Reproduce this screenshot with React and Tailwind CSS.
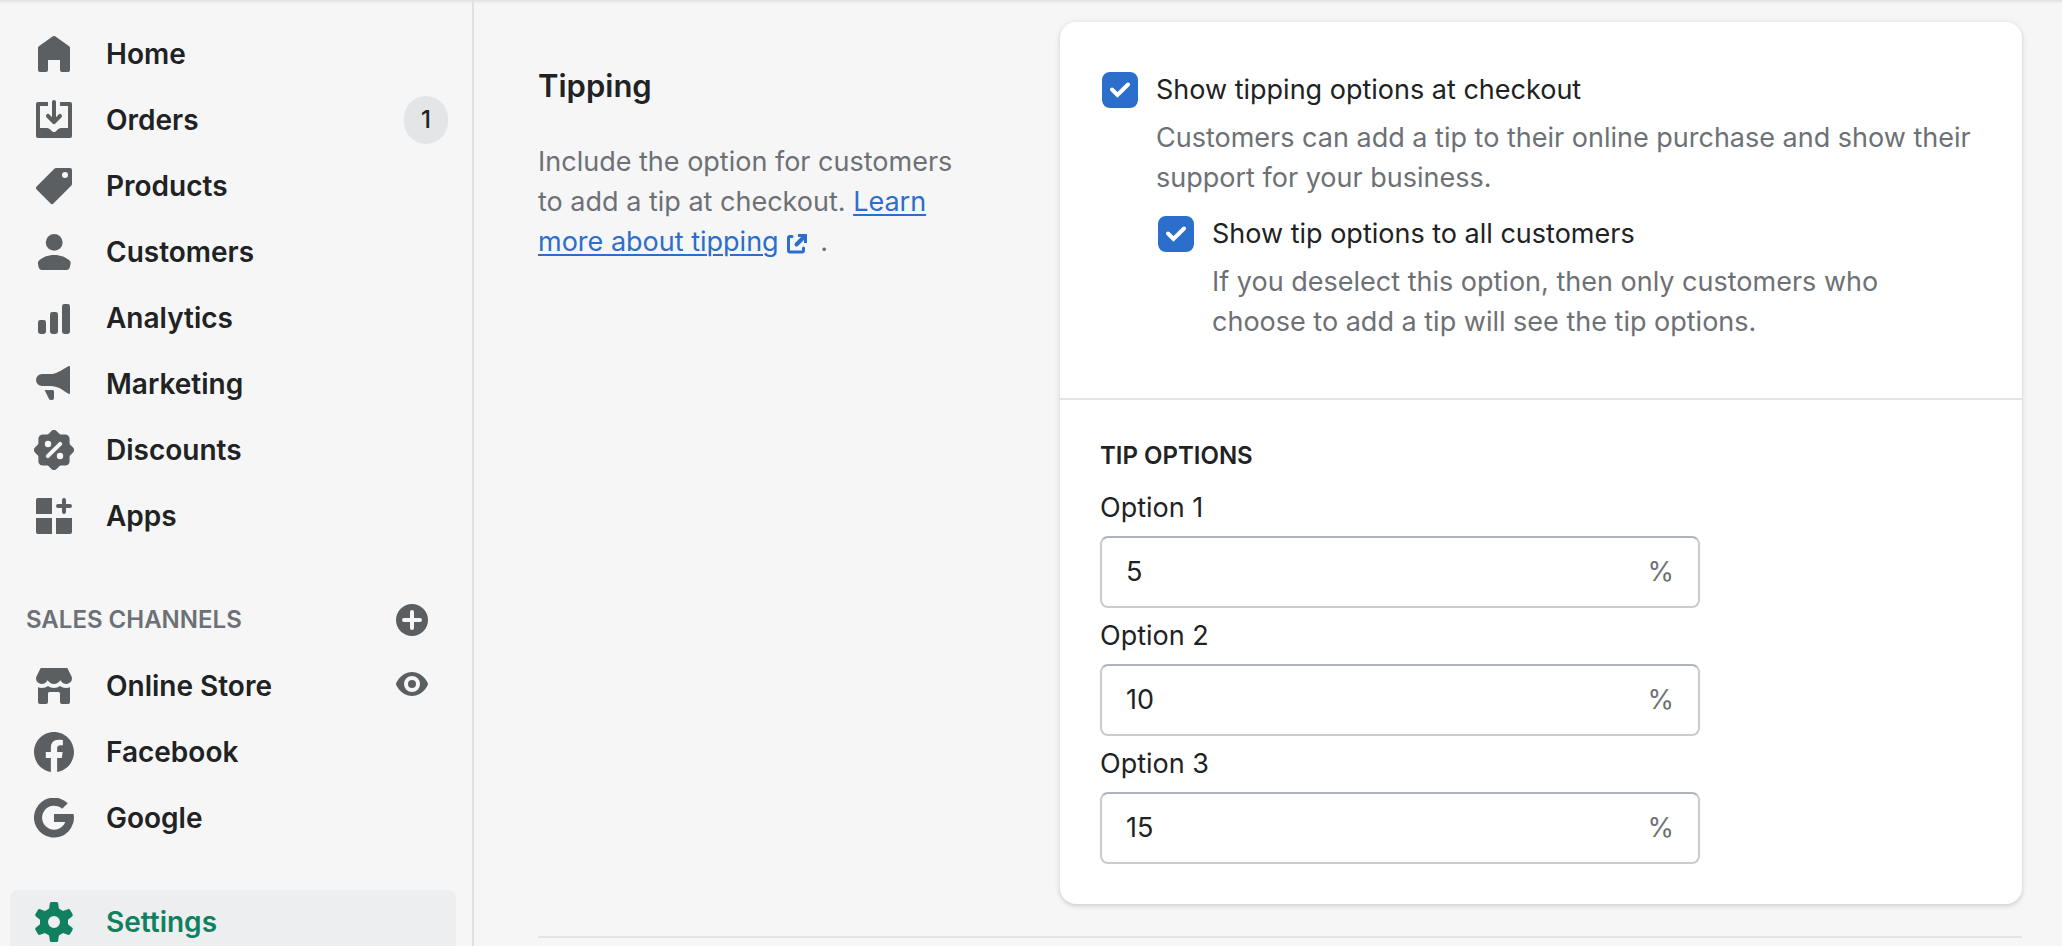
import React from "react";

function Icon({ children, className = "size-10" }) {
  return (
    <svg viewBox="0 0 20 20" className={`${className} shrink-0`} fill="currentColor" aria-hidden="true">
      {children}
    </svg>
  );
}

const HomeIcon = () => (
  <Icon>
    <path d="M13 13H7v5a1 1 0 0 1-1 1H3a1 1 0 0 1-1-1V7c0-.33.16-.64.42-.83l7-5a1 1 0 0 1 1.16 0l7 5c.26.19.42.5.42.83v11a1 1 0 0 1-1 1h-3a1 1 0 0 1-1-1v-5z" />
  </Icon>
);

const OrdersIcon = () => (
  <Icon>
    <path d="M11 1a1 1 0 1 0-2 0v7.59L7.71 7.29a1 1 0 0 0-1.42 1.42l3 3a1 1 0 0 0 1.42 0l3-3a1 1 0 0 0-1.42-1.42L11 8.59V1z" />
    <path d="M3 14V3h4V1H2a1 1 0 0 0-1 1v16a1 1 0 0 0 1 1h16a1 1 0 0 0 1-1V2a1 1 0 0 0-1-1h-5v2h4v11h-3.5c-.8 0-1.4.5-2 1.1-.5.6-.9.9-1.5.9s-1-.3-1.5-.9c-.6-.6-1.2-1.1-2-1.1H3z" />
  </Icon>
);

const ProductsIcon = () => (
  <Icon>
    <path
      fillRule="evenodd"
      d="M10.29 1.29A1 1 0 0 1 11 1h7a1 1 0 0 1 1 1v7a1 1 0 0 1-.29.71l-9 9a1 1 0 0 1-1.42 0l-7-7a1 1 0 0 1 0-1.42l9-9zM15.5 6a1.5 1.5 0 1 0 0-3 1.5 1.5 0 0 0 0 3z"
    />
  </Icon>
);

const CustomersIcon = () => (
  <Icon>
    <circle cx="10.1" cy="5.2" r="4.2" />
    <path d="M10.1 11.5c-3.2 0-6 1.2-7.7 2.9-.4.4-.5 1-.4 1.5l.3 1.7c.2.8.8 1.4 1.6 1.4h12.4c.8 0 1.4-.6 1.6-1.4l.4-1.7c.1-.5 0-1.1-.4-1.5-1.7-1.7-4.6-2.9-7.8-2.9z" />
  </Icon>
);

const AnalyticsIcon = () => (
  <Icon>
    <rect x="2" y="11" width="4" height="7" rx="1.2" />
    <rect x="8" y="7" width="4" height="11" rx="1.2" />
    <rect x="14" y="3" width="4" height="15" rx="1.2" />
  </Icon>
);

const MarketingIcon = () => (
  <Icon>
    <path d="M4 5h4c3.2 0 5.4-1.7 9.2-3.9.4-.2.8 0 .8.4v13c0 .4-.4.6-.8.4C14.6 13.2 12 11 8 11H4a3 3 0 0 1 0-6z" />
    <path d="M5.3 13h3.9c.5 0 .8.3.8.8V17a1 1 0 0 1-1 1h-.6c-.4 0-.7-.2-.9-.5L5.3 13z" />
  </Icon>
);

const DiscountsIcon = () => (
  <Icon>
    <rect x="2.2" y="2.2" width="15.6" height="15.6" rx="2.2" />
    <rect x="2.35" y="2.35" width="15.3" height="15.3" rx="2" transform="rotate(45 10 10)" />
    <g className="fill-[#f6f6f7] stroke-[#f6f6f7]">
      <circle cx="7" cy="7" r="1.6" stroke="none" />
      <circle cx="13" cy="13" r="1.6" stroke="none" />
      <path d="M6.9 13.1l6.2-6.2" strokeWidth="2" strokeLinecap="round" />
    </g>
  </Icon>
);

const AppsIcon = () => (
  <Icon>
    <path d="M2 1h7v8H1V2a1 1 0 0 1 1-1zM1 11h8v8H2a1 1 0 0 1-1-1v-7zM11 11h8v7a1 1 0 0 1-1 1h-7v-8z" />
    <path d="M15 2v6M12 5h6" stroke="currentColor" strokeWidth="2" strokeLinecap="round" />
  </Icon>
);

const AddIcon = () => (
  <Icon>
    <circle cx="10" cy="10" r="8" />
    <path d="M10 6v8M6 10h8" className="stroke-[#f6f6f7]" strokeWidth="2" strokeLinecap="round" />
  </Icon>
);

const StoreIcon = () => (
  <Icon>
    <path d="M3.9 1h12.2c.4 0 .8.2.9.6l1.7 3.5c.2.4.3.7.3 1.1A2.9 2.9 0 0 1 16.200 9c-1.400 0-2.300-.7-3-1.900C12.300 8.300 11.400 9 10 9s-2.300-.7-3.200-1.900C6.100 8.300 5.200 9 3.800 9A2.900 2.900 0 0 1 1 6.200c0-.4.1-.7.3-1.100L3 1.600c.1-.4.5-.6.9-.6z" />
    <path d="M2 10.600c.6.200 1.300.4 2 .4 1.100 0 2.200-.4 3-1 .8.600 1.900 1 3 1s2.200-.4 3-1c.8.600 1.900 1 3 1 .7 0 1.400-.2 2-.4V18a1 1 0 0 1-1 1h-3a1 1 0 0 1-1-1v-4.200a.8.8 0 0 0-.8-.8H7.800a.8.8 0 0 0-.8.8V18a1 1 0 0 1-1 1H3a1 1 0 0 1-1-1v-7.400z" />
  </Icon>
);

const EyeIcon = () => (
  <Icon>
    <path
      fillRule="evenodd"
      d="M17.93 8.63C17.84 8.4 15.57 3 10 3S2.16 8.4 2.07 8.63a1 1 0 0 0 0 .74C2.16 9.6 4.43 15 10 15s7.84-5.4 7.93-5.63a1 1 0 0 0 0-.74zM10 13a4 4 0 1 1 0-8 4 4 0 0 1 0 8z"
    />
    <circle cx="10" cy="9" r="2" />
  </Icon>
);

const FacebookIcon = () => (
  <Icon>
    <path d="M20 10.06C20 4.5 15.52 0 10 0S0 4.5 0 10.06c0 5.02 3.66 9.18 8.44 9.94v-7.03H5.9v-2.91h2.54V7.84c0-2.52 1.49-3.91 3.78-3.91 1.09 0 2.24.2 2.24.2V6.6h-1.26c-1.24 0-1.63.78-1.63 1.57v1.89h2.77l-.44 2.91h-2.33V20C16.34 19.24 20 15.08 20 10.06z" />
  </Icon>
);

const GoogleIcon = () => (
  <Icon>
    <path d="M19.8 8H10v4h5.65A6 6 0 1 1 14.1 5.4L16.9 2.6A10 10 0 1 0 19.8 8z" />
  </Icon>
);

const GearIcon = () => (
  <Icon>
    <circle cx="10" cy="10" r="5" fill="none" stroke="currentColor" strokeWidth="4" />
    {[0, 60, 120, 180, 240, 300].map((angle) => (
      <path
        key={angle}
        transform={`rotate(${angle} 10 10)`}
        d="M8.8 0h2.4c.5 0 .8.3.9.8l.3 2.2c.1.4.3.6.7.8L13.300 5h-6.600L6.900 3.800c.4-.2.6-.4.7-.8l.3-2.200c.1-.5.4-.8.9-.8z"
      />
    ))}
  </Icon>
);

const ExternalIcon = () => (
  <svg viewBox="0 0 32 32" className="ml-0.5 inline-block size-8 align-middle" fill="none" stroke="currentColor" strokeWidth="3" aria-hidden="true">
    <path d="M11 8.5H9A1.500 1.500 0 0 0 7.500 10V22.500A1.500 1.500 0 0 0 9 24h12a1.500 1.500 0 0 0 1.500-1.500V20" strokeLinecap="round" />
    <path d="M15.500 16.500L24 8" strokeLinecap="round" strokeWidth="4" />
    <path d="M17 7.500h7.500V15" />
  </svg>
);

const mainNav = [
  { label: "Home", icon: HomeIcon },
  { label: "Orders", icon: OrdersIcon, badge: "1" },
  { label: "Products", icon: ProductsIcon },
  { label: "Customers", icon: CustomersIcon },
  { label: "Analytics", icon: AnalyticsIcon },
  { label: "Marketing", icon: MarketingIcon },
  { label: "Discounts", icon: DiscountsIcon },
  { label: "Apps", icon: AppsIcon },
];

const channels = [
  { label: "Online Store", icon: StoreIcon, preview: true },
  { label: "Facebook", icon: FacebookIcon },
  { label: "Google", icon: GoogleIcon },
];

function NavItem({ label, icon: ItemIcon, badge, preview, active }) {
  return (
    <li
      className={`flex h-16 items-center rounded-lg pl-6 ${badge ? "pr-2" : "pr-6"} ${
        active ? "bg-[#edeeef] text-[#108060]" : "text-[#5c5f62]"
      }`}
    >
      <a href="#" className="flex grow items-center gap-8" aria-current={active ? "page" : undefined}>
        <ItemIcon />
        <span className={`text-[28px] font-semibold leading-10 ${active ? "text-[#108060]" : "text-[#202223]"}`}>
          {label}
        </span>
      </a>
      {badge && (
        <span className="flex h-12 w-11 items-center justify-center rounded-full bg-[#e4e5e7] text-2xl font-medium text-[#202223]">
          {badge}
        </span>
      )}
      {preview && (
        <button type="button" aria-label="View your online store">
          <EyeIcon />
        </button>
      )}
    </li>
  );
}

function Sidebar() {
  return (
    <nav className="flex w-[474px] shrink-0 flex-col gap-10 border-r-2 border-[#e1e1e2] pl-2.5 pr-4 pt-[22px]">
      <ul className="flex flex-col gap-0.5">
        {mainNav.map((item) => (
          <NavItem key={item.label} {...item} />
        ))}
      </ul>
      <div className="flex flex-col gap-0.5">
        <div className="flex h-16 items-center justify-between pl-4 pr-6 text-[#5c5f62]">
          <h2 className="text-2xl font-semibold uppercase text-[#6d7175]">Sales channels</h2>
          <button type="button" aria-label="Add sales channel">
            <AddIcon />
          </button>
        </div>
        <ul className="flex flex-col gap-0.5">
          {channels.map((item) => (
            <NavItem key={item.label} {...item} />
          ))}
        </ul>
      </div>
      <ul>
        <NavItem label="Settings" icon={GearIcon} active />
      </ul>
    </nav>
  );
}

function Choice({ id, label, help, children }) {
  return (
    <div className="flex gap-[18px]">
      <div className="relative mt-0.5 size-9 shrink-0">
        <input
          id={id}
          type="checkbox"
          defaultChecked
          aria-describedby={`${id}-help`}
          className="peer block size-9 appearance-none rounded-lg border-2 border-[#8c9196] bg-white checked:border-[#2c6ecb] checked:bg-[#2c6ecb]"
        />
        <svg
          viewBox="0 0 36 36"
          className="pointer-events-none absolute inset-0 hidden size-9 peer-checked:block"
          fill="none"
          stroke="white"
          strokeWidth="4"
          strokeLinecap="round"
          strokeLinejoin="miter"
          aria-hidden="true"
        >
          <path d="M10 17.500l5.500 5.500L26 12.500" />
        </svg>
      </div>
      <div className="min-w-0 grow">
        <label htmlFor={id} className="block">
          {label}
        </label>
        <p id={`${id}-help`} className="mt-2 text-[#6d7175]">
          {help}
        </p>
        {children}
      </div>
    </div>
  );
}

function TipField({ number, value }) {
  const id = `tip-option-${number}`;
  return (
    <div className="flex flex-col gap-2">
      <label htmlFor={id}>Option {number}</label>
      <div className="flex h-[72px] max-w-[600px] items-center rounded-lg border-2 border-[#c9cccf] border-t-[#aeb4b9] bg-white px-6">
        <input id={id} type="text" inputMode="decimal" defaultValue={value} className="w-0 grow outline-none" />
        <span className="text-[#6d7175]">%</span>
      </div>
    </div>
  );
}

export default function App() {
  return (
    <div className="flex h-screen overflow-hidden bg-[#f6f6f7] bg-[linear-gradient(#e1e1e2,#f6f6f7_4px)] font-['Inter','Liberation_Sans',sans-serif] text-[27px] leading-10 text-[#202223]">
      <Sidebar />
      <main className="grow pl-16 pr-10 pt-[22px]">
        <section className="grid grid-cols-[1fr_2fr] gap-[41px] border-b-2 border-[#e1e3e5] pb-8">
          <div className="pr-10 pt-10">
            <h2 className="text-[31px] font-semibold leading-[48px]">Tipping</h2>
            <p className="mt-8 text-[#6d7175]">
              Include the option for customers to add a tip at checkout.{" "}
              <a href="#" className="text-[#2c6ecb]">
                <span className="underline decoration-2 underline-offset-3">Learn more about tipping</span>
                <ExternalIcon />
              </a>{" "}
              .
            </p>
          </div>
          <div className="rounded-2xl bg-white shadow-[0_0_10px_rgba(23,24,24,0.05),0_2px_4px_rgba(23,24,24,0.15)]">
            <div className="px-[42px] pb-14 pt-12">
              <Choice
                id="show-tipping"
                label="Show tipping options at checkout"
                help="Customers can add a tip to their online purchase and show their support for your business."
              >
                <div className="mt-4 pl-0.5 pr-4">
                  <Choice
                    id="show-all"
                    label="Show tip options to all customers"
                    help="If you deselect this option, then only customers who choose to add a tip will see the tip options."
                  />
                </div>
              </Choice>
            </div>
            <div className="border-t-2 border-[#e1e3e5] p-10">
              <h3 className="mb-4 text-2xl font-semibold uppercase">Tip options</h3>
              <div className="flex flex-col gap-2">
                <TipField number={1} value="5" />
                <TipField number={2} value="10" />
                <TipField number={3} value="15" />
              </div>
            </div>
          </div>
        </section>
      </main>
    </div>
  );
}
